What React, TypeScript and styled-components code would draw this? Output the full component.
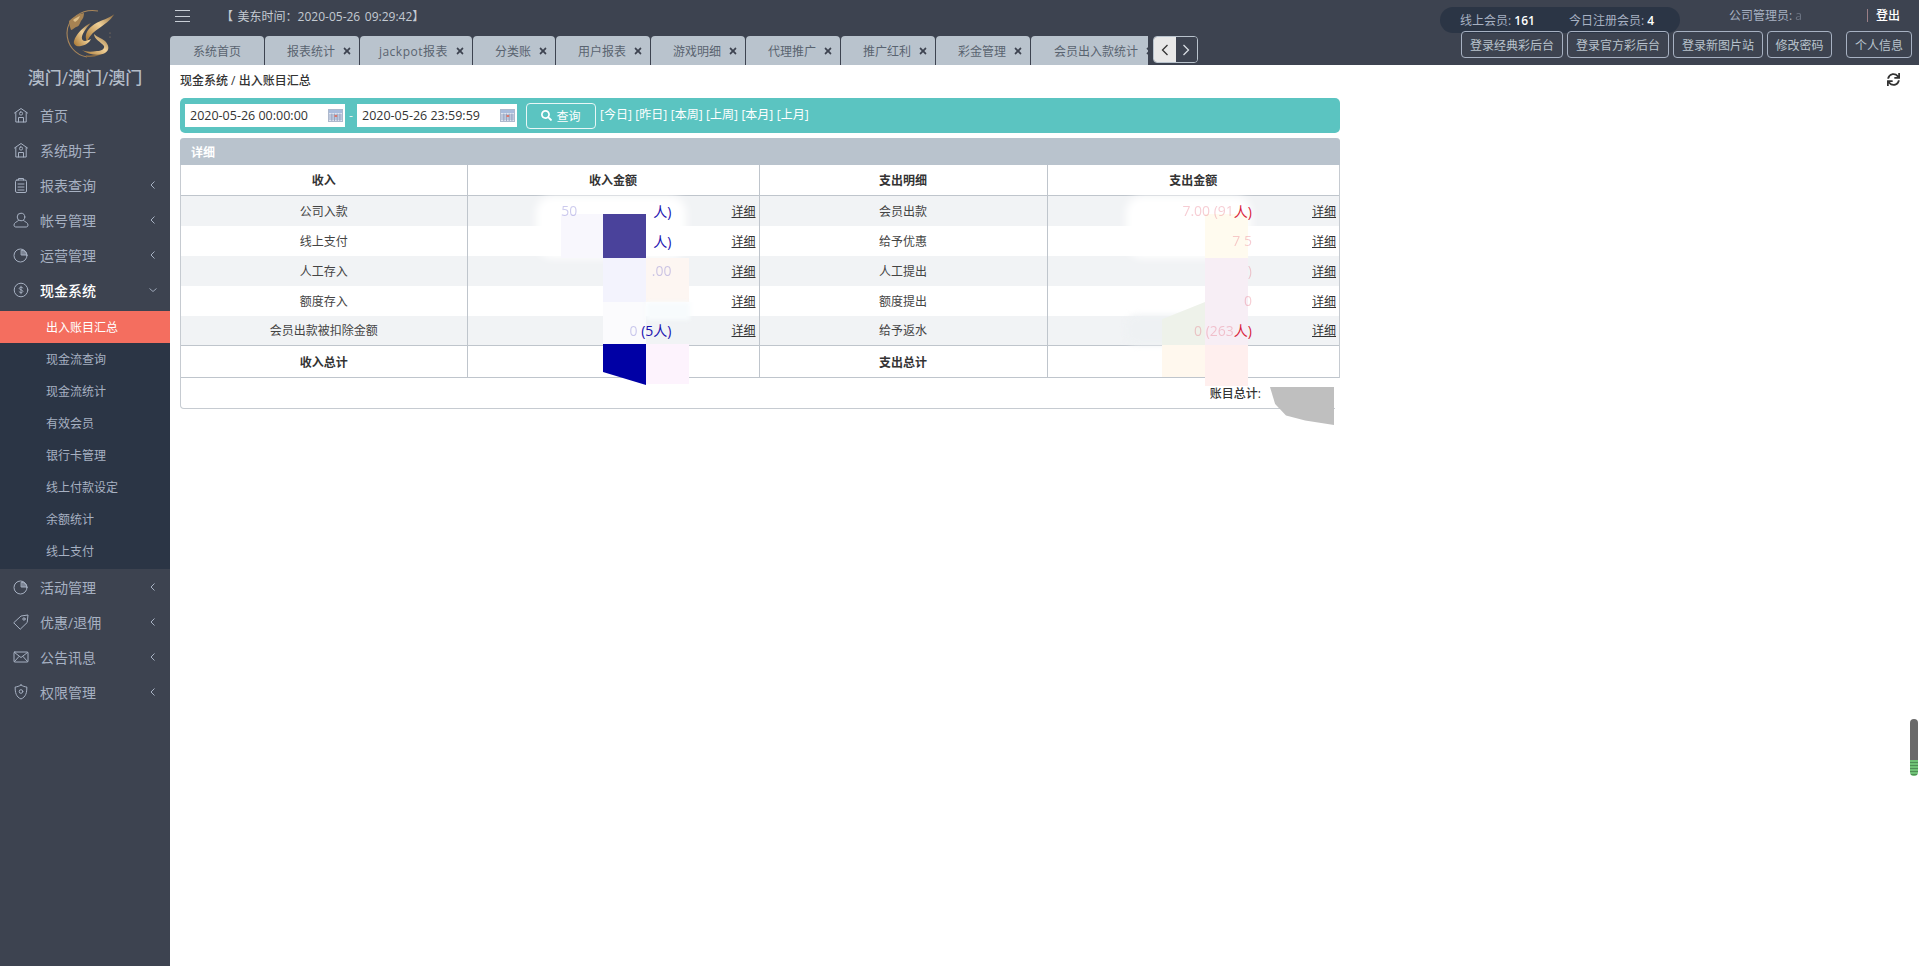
import React from 'react';
import styled, { createGlobalStyle } from 'styled-components';
import { FaTimes, FaSearch, FaSync } from 'react-icons/fa';

const FONT = `"Open Sans", "Noto Sans CJK SC", "Noto Sans", sans-serif`;

const Global = createGlobalStyle`
  html, body { margin: 0; padding: 0; height: 100%; overflow: hidden; background: #fff; }
  body { font-family: ${FONT}; font-size: 12px; color: #333; }
  * { box-sizing: border-box; }
`;

const Page = styled.div`
  display: flex;
  height: 966px;
  width: 1919px;
  position: relative;
  overflow: hidden;
`;

const Sidebar = styled.aside`
  width: 170px;
  flex: none;
  background: #3d4350;
  display: flex;
  flex-direction: column;
`;
const Brand = styled.div`
  height: 97px;
  display: flex;
  flex-direction: column;
  align-items: center;
  padding-top: 9px;
`;
const LogoMark = styled.svg`
  width: 52px;
  height: 52px;
  margin-left: 10px;
  flex: none;
`;
const BrandName = styled.div`
  font-size: 17px;
  line-height: 22px;
  margin-top: 6px;
  color: #b4bdc9;
  font-weight: 500;
`;
const MenuRow = styled.div<{ $open?: boolean }>`
  height: 35px;
  display: flex;
  align-items: center;
  padding-left: 13px;
  color: ${p => (p.$open ? '#ffffff' : '#a7b1c2')};
  font-size: 14px;
  font-weight: ${p => (p.$open ? 500 : 400)};
  svg { color: #a7b1c2; }
  svg.mi { width: 16px; height: 16px; flex: none; margin-right: 11px; }
`;
const MenuLabel = styled.span`
  flex: 1;
`;
const Chevron = styled.svg`
  width: 8px;
  height: 10px;
  margin-right: 13px;
  flex: none;
`;
const SubMenu = styled.div`
  background: #2b3545;
  margin-top: 4px;
  padding: 0 0 2px;
`;
const SubItem = styled.div<{ $active?: boolean }>`
  height: 32px;
  line-height: 34px;
  padding-left: 46px;
  font-size: 12px;
  color: ${p => (p.$active ? '#fff' : '#a7b1c2')};
  background: ${p => (p.$active ? '#f46e5f' : 'transparent')};
`;

const Main = styled.main`
  flex: 1;
  min-width: 0;
  display: flex;
  flex-direction: column;
`;
const Header = styled.header`
  height: 65px;
  flex: none;
  background: #3d4350;
  display: flex;
  justify-content: space-between;
`;
const HeaderLeft = styled.div`
  display: flex;
  flex-direction: column;
`;
const TopLine = styled.div`
  height: 36px;
  display: flex;
  align-items: center;
  padding: 0 0 4px 5px;
`;
const Burger = styled.div`
  width: 15px;
  height: 12px;
  border-top: 1px solid #c8ced6;
  border-bottom: 1px solid #c8ced6;
  margin-right: 31px;
  display: flex;
  align-items: center;
  &::before { content: ''; display: block; width: 100%; height: 1px; background: #c8ced6; }
`;
const TimeText = styled.div`
  color: #c4cad2;
  font-size: 12px;
  white-space: nowrap;
  word-spacing: 1.5px;
`;
const TabLine = styled.div`
  display: flex;
  align-items: flex-start;
  height: 29px;
`;
const TabStrip = styled.div`
  width: 978px;
  overflow: hidden;
  display: flex;
  height: 29px;
`;
const Tab = styled.div<{ $w: number; $spread?: boolean }>`
  width: ${p => p.$w}px;
  flex: none;
  height: 29px;
  background: #b9c3cd;
  border-radius: 4px 4px 0 0;
  margin-right: 1px;
  display: flex;
  align-items: center;
  justify-content: flex-end;
  color: #596370;
  font-size: 12px;
  letter-spacing: ${p => (p.$spread ? '0.5px' : '0')};
  white-space: nowrap;
  padding-right: 7px;
  svg { width: 10px; height: 10px; margin-left: 7px; color: #3d4350; flex: none; }
`;
const TabPlain = styled(Tab)`
  justify-content: center;
  padding-right: 0;
`;
const TabNav = styled.div`
  margin-left: 5px;
  width: 45px;
  height: 27px;
  border: 1px solid #b9c3cd;
  border-radius: 4px;
  display: flex;
  overflow: hidden;
`;
const TabNavBtn = styled.div<{ $light?: boolean }>`
  flex: 1;
  display: flex;
  align-items: center;
  justify-content: center;
  background: ${p => (p.$light ? '#e8e8e8' : '#3d4350')};
  color: ${p => (p.$light ? '#333' : '#d8dde3')};
`;
const HeaderRight = styled.div`
  width: 479px;
  display: flex;
  flex-direction: column;
`;
const StatusLine = styled.div`
  height: 25px;
  margin-top: 7px;
  display: flex;
  align-items: center;
`;
const Pill = styled.div`
  width: 240px;
  height: 26px;
  border-radius: 13px;
  background: #2b3545;
  display: flex;
  align-items: center;
  padding-left: 20px;
  gap: 34px;
  color: #a7b1c2;
  font-size: 12px;
  b { color: #fff; font-weight: 600; }
`;
const Admin = styled.div`
  margin-left: 49px;
  width: 138px;
  color: #a7b1c2;
  font-size: 12px;
  white-space: nowrap;
  margin-top: -9px;
  span { opacity: 0.45; }
`;
const Logout = styled.div`
  color: #fff;
  font-weight: 500;
  font-size: 12px;
  border-left: 1px solid #9a7f86;
  line-height: 13px;
  padding-left: 8px;
  margin-top: -8px;
`;
const ButtonLine = styled.div`
  display: flex;
  justify-content: flex-end;
  padding-right: 7px;
  margin-top: -1px;
  gap: 4px;
`;
const HeadButton = styled.div<{ $w: number; $gap?: number }>`
  width: ${p => p.$w}px;
  height: 27px;
  margin-left: ${p => p.$gap ?? 0}px;
  border: 1px solid #a7b1c2;
  border-radius: 4px;
  display: flex;
  align-items: center;
  justify-content: center;
  color: #b9c3cd;
  font-size: 12px;
  white-space: nowrap;
`;

const Content = styled.div`
  flex: 1;
  padding: 0 10px;
`;
const Crumb = styled.div`
  height: 33px;
  padding: 0 9px 4px 0;
  display: flex;
  align-items: center;
  justify-content: space-between;
  font-size: 12px;
  font-weight: 500;
  color: #333;
  svg { width: 13px; height: 13px; color: #333; }
`;
const Wide = styled.div`
  width: 1160px;
`;
const Toolbar = styled.div`
  height: 35px;
  background: #5bc4c1;
  border-radius: 5px;
  display: flex;
  align-items: center;
  padding-left: 5px;
`;
const DateBox = styled.div`
  width: 160px;
  height: 23px;
  background: #fff;
  display: flex;
  align-items: center;
  justify-content: space-between;
  padding: 0 2px 0 5px;
  color: #333;
  font-size: 12.5px;
`;
const Dash = styled.span`
  width: 12px;
  text-align: center;
  color: #e5f5f4;
`;
const QueryBtn = styled.div`
  width: 70px;
  height: 26px;
  margin-left: 9px;
  border: 1px solid #e8f7f6;
  border-radius: 4px;
  display: flex;
  align-items: center;
  justify-content: center;
  gap: 4px;
  color: #fff;
  font-size: 12px;
  svg { width: 11px; height: 11px; }
`;
const QuickLinks = styled.div`
  margin-left: 4px;
  color: #fff;
  font-size: 12px;
  white-space: nowrap;
  margin-top: -3px;
  span { margin-right: 3.5px; }
`;
const Panel = styled.section`
  margin-top: 5px;
  height: 271px;
  border: 1px solid #c6cbd1;
  border-top: 0;
  border-radius: 4px;
  position: relative;
`;
const PanelHead = styled.div`
  height: 27px;
  margin: 0 -1px;
  background: #b9c3cd;
  border-radius: 4px 4px 0 0;
  color: #fff;
  font-weight: 600;
  font-size: 12px;
  line-height: 29px;
  padding-left: 11px;
`;
const Table = styled.table`
  width: 100%;
  border-collapse: collapse;
  table-layout: fixed;
  font-size: 12px;
`;
const Cell = styled.td`
  height: 30px;
  padding: 0;
  text-align: center;
  color: #444;
  border-left: 1px solid #bfc5cc;
  &:first-child { border-left: 0; }
`;
const HeadCell = styled.th`
  height: 30.5px;
  padding: 0;
  font-weight: 600;
  color: #333;
  text-align: center;
  border-left: 1px solid #bfc5cc;
  border-bottom: 1px solid #bfc5cc;
  &:first-child { border-left: 0; }
`;
const TotalCell = styled(HeadCell)`
  height: 32px;
  border-top: 1px solid #bfc5cc;
`;
const Row = styled.tr<{ $stripe?: boolean }>`
  background: ${p => (p.$stripe ? '#f1f3f5' : '#fff')};
`;
const AmountWrap = styled.div`
  display: flex;
  justify-content: flex-end;
  align-items: center;
  position: relative;
  z-index: 2;
`;
const Amount = styled.span<{ $tone: 'in' | 'out'; $faint?: boolean; $end?: number }>`
  color: ${p => (p.$tone === 'in' ? '#1a12b0' : '#d81e3c')};
  opacity: ${p => (p.$faint ? 0.22 : 1)};
  margin-right: ${p => p.$end ?? 0}px;
  white-space: nowrap;
  font-size: 14px;
`;
const Detail = styled.a`
  color: #333;
  text-decoration: underline;
`;
const AmountCell = styled.div`
  display: grid;
  grid-template-columns: 1fr 24px;
  align-items: center;
  column-gap: 60px;
  padding-right: 3px;
`;
const Foot = styled.div`
  height: 29px;
  display: flex;
  justify-content: flex-end;
  align-items: center;
  padding-right: 78px;
  font-weight: 500;
  color: #333;
  font-size: 12px;
  position: relative;
  z-index: 2;
`;
const Smear = styled.div<{ $x: number; $y: number; $w: number; $h: number; $c: string; $clip?: string; $blur?: number; $r?: number }>`
  position: absolute;
  left: ${p => p.$x - 180}px;
  top: ${p => p.$y - 138}px;
  width: ${p => p.$w}px;
  height: ${p => p.$h}px;
  background: ${p => p.$c};
  clip-path: ${p => p.$clip ?? 'none'};
  filter: ${p => (p.$blur ? `blur(${p.$blur}px)` : 'none')};
  border-radius: ${p => p.$r ?? 0}px;
  z-index: 1;
`;
const GlowBar = styled.div`
  position: absolute;
  left: 1910px;
  top: 719px;
  width: 8px;
  height: 57px;
  border-radius: 4px;
  background:
    repeating-linear-gradient(#6fc276 0 2px, #4f8f56 2px 3px) 0 41px / 100% 16px no-repeat,
    #6a6a6a;
`;

const Ico: React.FC<{ children: React.ReactNode }> = ({ children }) => (
  <svg className="mi" viewBox="0 0 16 16" fill="none" stroke="currentColor" strokeWidth="1" strokeLinejoin="round" strokeLinecap="round">
    {children}
  </svg>
);
const HomeI = () => (
  <Ico>
    <path d="M1.5 6 8 1.500 14.500 6" />
    <path d="M2.800 5.500v9.500h10.400V5.500" />
    <path d="M5.500 15v-4.500h5V15" />
    <rect x="6.500" y="5" width="3" height="3" rx="1.200" />
  </Ico>
);
const ClipI = () => (
  <Ico>
    <rect x="2.500" y="3" width="11" height="12.500" rx="1.500" />
    <path d="M5.500 3V1.500h5V3M5 7h6M5 10h6M5 13h6" />
  </Ico>
);
const UserI = () => (
  <Ico>
    <circle cx="8" cy="5" r="3.800" />
    <path d="M5.500 8.500C4 10 1 10.500 1 13c0 1.500.8 2 2 2h10c1.200 0 2-.5 2-2 0-2.500-3-3-4.500-4.500" />
  </Ico>
);
const PieI = () => (
  <Ico>
    <circle cx="7.500" cy="8.500" r="6.500" />
    <path d="M8.500 3.200a5.400 5.400 0 0 1 5.400 4.800H8.500z" fill="currentColor" fillOpacity=".6" />
  </Ico>
);
const DollarI = () => (
  <Ico>
    <circle cx="8" cy="8" r="6.800" />
    <path d="M10 6c-.5-.9-3.500-1.200-3.800.3C6 8 10 7.500 9.900 9.500c-.2 1.500-3.300 1.300-3.900.2M8 4.200v7.600" strokeWidth=".9" />
  </Ico>
);
const TagI = () => (
  <Ico>
    <path d="M1 8.500 8 2l7-1-.8 7.500L7.500 15z" />
    <circle cx="11" cy="5" r="1.200" />
  </Ico>
);
const MailI = () => (
  <Ico>
    <rect x="1" y="3" width="14" height="10" rx=".8" />
    <path d="m1.500 3.500 6.500 5 6.500-5M1.500 12.500 6 7.500M14.500 12.500 10 7.500" />
  </Ico>
);
const ShieldI = () => (
  <Ico>
    <path d="M8 1c2 1.300 3.800 1.800 5.800 2 .2 5.500-1 10-5.800 12C3.200 13 2 8.500 2.200 3 4.200 2.800 6 2.300 8 1z" />
    <circle cx="8" cy="7.500" r="1.800" />
  </Ico>
);

const ChevLeft = () => (
  <Chevron viewBox="0 0 8 10" fill="none" stroke="currentColor" strokeWidth="1">
    <path d="M5.500 1.500 2 5l3.500 3.500" />
  </Chevron>
);
const ChevDown = () => (
  <Chevron viewBox="0 0 8 10" fill="none" stroke="currentColor" strokeWidth=".9">
    <path d="M.5 3.500 4 6.500l3.500-3" />
  </Chevron>
);
const NavArrow = ({ dir }: { dir: 'l' | 'r' }) => (
  <svg width="10" height="12" viewBox="0 0 10 12" fill="none" stroke="currentColor" strokeWidth="1.300">
    <path d={dir === 'l' ? 'M7.500 1 2.500 6l5 5' : 'M2.500 1l5 5-5 5'} />
  </svg>
);
const Calendar = () => (
  <svg width="15" height="13" viewBox="0 0 15 13">
    <rect x=".5" y=".5" width="14" height="12" fill="#dfe5f1" stroke="#aeb9cd" />
    <rect x="1" y="1" width="13" height="3" fill="#a9bcdc" />
    <path d="M1 6h13M1 8h13M1 10h13M3.800 4.500V12M6.500 4.500V12M9.200 4.500V12M11.900 4.500V12" stroke="#8c9cbc" strokeWidth=".8" />
    <rect x="6.500" y="6" width="2.700" height="2" fill="#d9776d" />
  </svg>
);
const Logo = () => (
  <LogoMark viewBox="0 0 52 52">
    <defs>
      <linearGradient id="g" x1="1" y1="0" x2="0" y2="1">
        <stop offset="0" stopColor="#8d6a3d" />
        <stop offset=".45" stopColor="#f0d097" />
        <stop offset="1" stopColor="#a5732f" />
      </linearGradient>
    </defs>
    <path d="M34 2C18 -1 3 10 3 24c0 12 8 22 20 24" fill="none" stroke="#a9865a" strokeWidth="1.100" />
    <path d="M22 47c8 1 16-2 21-7" fill="none" stroke="#8a6c45" strokeWidth="1.300" />
    <path d="M5 12C9 8 14 5 20 4c0 3-1 6-3 8-1 2-2 6-5 6-2 1-4 3-5 3-1-3-2-6-2-9z" fill="#a78353" />
    <path d="M9 11c2-2 5-3 7-4-1 3-3 5-5 6z" fill="#dfc08a" />
    <path d="M50.300 5.300C42 11 34 12 28 17c-5 4-8 9-5 16 2-5 5-9 11-13 7-5 12-8 16.300-14.700z" fill="url(#g)" />
    <path d="M27 14C20 17 12 25 10 32c-1 4 3 6 7 5 5-1 9-4 10-7-4 2-8 3-9 0-1-4 4-11 9-16z" fill="url(#g)" />
    <path d="M30 25c0 5 7 8 10 12 1 3-3 5-7 5-6 1-11 1-15-1 6 5 18 6 23 3 5-3 4-8 0-12-4-3-8-4-11-7z" fill="url(#g)" />
    <circle cx="46" cy="24" r=".6" fill="#9a8568" />
    <circle cx="46" cy="28" r=".6" fill="#9a8568" />
  </LogoMark>
);

type MenuDef = { label: string; icon: React.ReactNode; arrow?: boolean };
const topMenu: MenuDef[] = [
  { label: '首页', icon: <HomeI /> },
  { label: '系统助手', icon: <HomeI /> },
  { label: '报表查询', icon: <ClipI />, arrow: true },
  { label: '帐号管理', icon: <UserI />, arrow: true },
  { label: '运营管理', icon: <PieI />, arrow: true },
];
const bottomMenu: MenuDef[] = [
  { label: '活动管理', icon: <PieI />, arrow: true },
  { label: '优惠/退佣', icon: <TagI />, arrow: true },
  { label: '公告讯息', icon: <MailI />, arrow: true },
  { label: '权限管理', icon: <ShieldI />, arrow: true },
];
const subItems = ['出入账目汇总', '现金流查询', '现金流统计', '有效会员', '银行卡管理', '线上付款设定', '余额统计', '线上支付'];
const tabs = [
  { t: '报表统计', w: 94 },
  { t: 'jackpot报表', w: 112, spread: true },
  { t: '分类账', w: 82 },
  { t: '用户报表', w: 94 },
  { t: '游戏明细', w: 94 },
  { t: '代理推广', w: 94 },
  { t: '推广红利', w: 94 },
  { t: '彩金管理', w: 94 },
  { t: '会员出入款统计', w: 131 },
];
const smears = [
  { x: 535, y: 196, w: 150, h: 62, c: '#ffffff', blur: 4, r: 16 },
  { x: 560, y: 214, w: 42, h: 44, c: '#f8f7fd' },
  { x: 602, y: 214, w: 43, h: 44, c: '#4a429b' },
  { x: 602, y: 258, w: 43, h: 44, c: '#f3f3fd' },
  { x: 645, y: 258, w: 43, h: 44, c: '#fdf6f2' },
  { x: 602, y: 302, w: 43, h: 42, c: '#fbfbfd' },
  { x: 645, y: 302, w: 44, h: 18, c: '#f7fbfd', blur: 2 },
  { x: 602, y: 344, w: 43, h: 41, c: '#0000a5', clip: 'polygon(0 0,100% 0,100% 100%,0 68%)' },
  { x: 645, y: 344, w: 43, h: 40, c: '#fdf3fd' },
  { x: 1125, y: 196, w: 125, h: 62, c: '#ffffff', blur: 4, r: 16 },
  { x: 1125, y: 315, w: 82, h: 30, c: '#eef1f3', blur: 3, r: 10 },
  { x: 1204, y: 214, w: 43, h: 44, c: '#fffbef' },
  { x: 1204, y: 258, w: 43, h: 87, c: '#f7eef5' },
  { x: 1161, y: 302, w: 43, h: 43, c: '#eef2ea', clip: 'polygon(0 40%,100% 0,100% 100%,0 100%)' },
  { x: 1161, y: 345, w: 43, h: 32, c: '#fff8ee' },
  { x: 1204, y: 345, w: 43, h: 41, c: '#ffefee' },
  { x: 1334, y: 378, w: 8, h: 34, c: '#ffffff' },
  { x: 1269, y: 387, w: 64, h: 38, c: '#bfbfbf', clip: 'polygon(0 0,100% 0,100% 100%,55% 88%,25% 75%,8% 45%)' },
];

const rows = [
  { a: '公司入款', inA: <><Amount $tone="in" $faint $end={76}>50</Amount><Amount $tone="in">人)</Amount></>, b: '会员出款', outA: <><Amount $tone="out" $faint>7.00 (91</Amount><Amount $tone="out">人)</Amount></> },
  { a: '线上支付', inA: <Amount $tone="in">人)</Amount>, b: '给予优惠', outA: <Amount $tone="out" $faint>7 5</Amount> },
  { a: '人工存入', inA: <Amount $tone="in" $faint>.00</Amount>, b: '人工提出', outA: <Amount $tone="out" $faint>)</Amount> },
  { a: '额度存入', inA: null, b: '额度提出', outA: <Amount $tone="out" $faint>0</Amount> },
  { a: '会员出款被扣除金额', inA: <><Amount $tone="in" $faint>0</Amount><Amount $tone="in">&nbsp;(5人)</Amount></>, b: '给予返水', outA: <><Amount $tone="out" $faint>0 (263</Amount><Amount $tone="out">人)</Amount></> },
];

const Col = styled.col<{ $w: number }>`
  width: ${p => p.$w}px;
`;

export default function App() {
  return (
    <Page>
      <Global />
      <Sidebar>
        <Brand>
          <Logo />
          <BrandName>澳门/澳门/澳门</BrandName>
        </Brand>
        {topMenu.map(m => (
          <MenuRow key={m.label}>
            {m.icon}
            <MenuLabel>{m.label}</MenuLabel>
            {m.arrow && <ChevLeft />}
          </MenuRow>
        ))}
        <MenuRow $open>
          <DollarI />
          <MenuLabel>现金系统</MenuLabel>
          <ChevDown />
        </MenuRow>
        <SubMenu>
          {subItems.map((s, i) => (
            <SubItem key={s} $active={i === 0}>{s}</SubItem>
          ))}
        </SubMenu>
        {bottomMenu.map(m => (
          <MenuRow key={m.label}>
            {m.icon}
            <MenuLabel>{m.label}</MenuLabel>
            {m.arrow && <ChevLeft />}
          </MenuRow>
        ))}
      </Sidebar>
      <Main>
        <Header>
          <HeaderLeft>
            <TopLine>
              <Burger />
              <TimeText>【 美东时间：2020-05-26 09:29:42】</TimeText>
            </TopLine>
            <TabLine>
              <TabStrip>
                <TabPlain $w={94}>系统首页</TabPlain>
                {tabs.map(t => (
                  <Tab key={t.t} $w={t.w} $spread={t.spread}>
                    {t.t}
                    <FaTimes />
                  </Tab>
                ))}
              </TabStrip>
              <TabNav>
                <TabNavBtn $light><NavArrow dir="l" /></TabNavBtn>
                <TabNavBtn><NavArrow dir="r" /></TabNavBtn>
              </TabNav>
            </TabLine>
          </HeaderLeft>
          <HeaderRight>
            <StatusLine>
              <Pill>
                <span>线上会员: <b>161</b></span>
                <span>今日注册会员: <b>4</b></span>
              </Pill>
              <Admin>公司管理员: <span>a</span></Admin>
              <Logout>登出</Logout>
            </StatusLine>
            <ButtonLine>
              <HeadButton $w={102}>登录经典彩后台</HeadButton>
              <HeadButton $w={102}>登录官方彩后台</HeadButton>
              <HeadButton $w={90}>登录新图片站</HeadButton>
              <HeadButton $w={65}>修改密码</HeadButton>
              <HeadButton $w={66} $gap={10}>个人信息</HeadButton>
            </ButtonLine>
          </HeaderRight>
        </Header>
        <Content>
          <Crumb>
            <span>现金系统 / 出入账目汇总</span>
            <FaSync />
          </Crumb>
          <Wide>
            <Toolbar>
              <DateBox>2020-05-26 00:00:00<Calendar /></DateBox>
              <Dash>-</Dash>
              <DateBox>2020-05-26 23:59:59<Calendar /></DateBox>
              <QueryBtn><FaSearch />查询</QueryBtn>
              <QuickLinks>
                {['[今日]', '[昨日]', '[本周]', '[上周]', '[本月]', '[上月]'].map(q => <span key={q}>{q}</span>)}
              </QuickLinks>
            </Toolbar>
            <Panel>
              <PanelHead>详细</PanelHead>
              <Table>
                <colgroup>
                  <Col $w={286} />
                  <Col $w={292} />
                  <Col $w={288} />
                </colgroup>
                <thead>
                  <tr>
                    <HeadCell>收入</HeadCell>
                    <HeadCell>收入金额</HeadCell>
                    <HeadCell>支出明细</HeadCell>
                    <HeadCell>支出金额</HeadCell>
                  </tr>
                </thead>
                <tbody>
                  {rows.map((r, i) => (
                    <Row key={r.a} $stripe={i % 2 === 0}>
                      <Cell>{r.a}</Cell>
                      <Cell>
                        <AmountCell>
                          <AmountWrap>{r.inA}</AmountWrap>
                          <Detail>详细</Detail>
                        </AmountCell>
                      </Cell>
                      <Cell>{r.b}</Cell>
                      <Cell>
                        <AmountCell>
                          <AmountWrap>{r.outA}</AmountWrap>
                          <Detail>详细</Detail>
                        </AmountCell>
                      </Cell>
                    </Row>
                  ))}
                  <tr>
                    <TotalCell>收入总计</TotalCell>
                    <TotalCell />
                    <TotalCell>支出总计</TotalCell>
                    <TotalCell />
                  </tr>
                </tbody>
              </Table>
              <Foot>账目总计:</Foot>
              {smears.map((s, i) => (
                <Smear key={i} $x={s.x} $y={s.y} $w={s.w} $h={s.h} $c={s.c} $clip={s.clip} $blur={s.blur} $r={s.r} />
              ))}
            </Panel>
          </Wide>
        </Content>
      </Main>
      <GlowBar />
    </Page>
  );
}
